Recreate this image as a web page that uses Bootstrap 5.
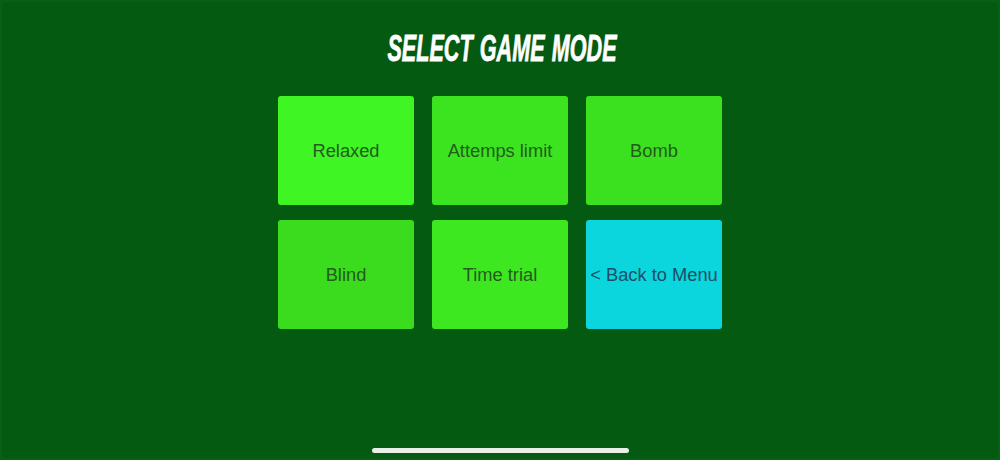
<!doctype html>
<html lang="en"><head><meta charset="utf-8"><title>Select Game Mode</title>
<link href="https://cdn.jsdelivr.net/npm/bootstrap@5.3.0/dist/css/bootstrap.min.css" rel="stylesheet">
<style>
html,body{height:460px;overflow:hidden}
body{background:#045a10;font-family:"Liberation Sans",Arial,sans-serif}
.screen{height:460px;box-shadow:inset 0 0 0 2px #0a5f17;padding-top:28px}
.screen-title{font-family:"Liberation Sans",sans-serif;font-weight:700;font-style:italic;font-size:36px;line-height:42px;height:42px;color:#fff;margin:0;-webkit-text-stroke:.8px #fff;white-space:nowrap;word-spacing:2px;transform:scaleX(.6)}
.mode-grid{display:grid;grid-template-columns:repeat(3,136px);grid-auto-rows:109px;column-gap:18px;row-gap:15px;margin-top:26px}
.mode-btn{border:0;border-radius:3px;padding:0;font-size:18.3px;color:#235c1c;background:#3be01f;display:flex;align-items:center;justify-content:center;white-space:nowrap;transition:none}
.mode-relaxed{background:#3ff524}.mode-attempts{background:#3ce41f}.mode-bomb{background:#3be01e}.mode-blind{background:#3adc1d}.mode-time{background:#3ee821}
.mode-back{background:#0bd6de;color:#1c4f66}
.home-bar{width:257px;height:5px;background:#e8f0e8;border-radius:3px;bottom:7px;left:372px}
</style></head>
<body>
<div class="screen position-relative d-flex flex-column align-items-center">
<h1 class="screen-title text-center text-uppercase ms-1">Select Game Mode</h1>
<div class="mode-grid">
<button class="btn mode-btn mode-relaxed" type="button">Relaxed</button>
<button class="btn mode-btn mode-attempts" type="button">Attemps limit</button>
<button class="btn mode-btn mode-bomb" type="button">Bomb</button>
<button class="btn mode-btn mode-blind" type="button">Blind</button>
<button class="btn mode-btn mode-time" type="button">Time trial</button>
<button class="btn mode-btn mode-back" type="button">&lt; Back to Menu</button>
</div>
<div class="home-bar position-absolute"></div>
</div>
<script src="https://cdn.jsdelivr.net/npm/bootstrap@5.3.0/dist/js/bootstrap.bundle.min.js"></script>
</body></html>
